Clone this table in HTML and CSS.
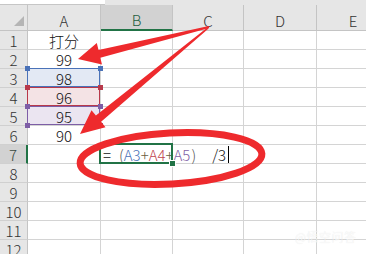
FILE: index.html
```html
<!DOCTYPE html>
<html lang="zh">
<head>
<meta charset="utf-8">
<title>Excel</title>
<link rel="stylesheet" href="styles.css">
</head>
<body>
<div class="sheet">
  <div class="topbar"><div class="namebox"></div><div class="fbar"></div></div>
  <div class="grid">
    <div class="corner"><span class="tri"></span></div>
    <div class="ch">A</div><div class="ch sel">B</div><div class="ch">C</div><div class="ch">D</div><div class="ch">E</div>

    <div class="rh">1</div><div class="c">打分</div><div class="c"></div><div class="c"></div><div class="c"></div><div class="c"></div>
    <div class="rh">2</div><div class="c">99</div><div class="c"></div><div class="c"></div><div class="c"></div><div class="c"></div>
    <div class="rh">3</div><div class="c ref r-blue">98</div><div class="c"></div><div class="c"></div><div class="c"></div><div class="c"></div>
    <div class="rh">4</div><div class="c ref r-red">96</div><div class="c"></div><div class="c"></div><div class="c"></div><div class="c"></div>
    <div class="rh">5</div><div class="c ref r-purple last">95</div><div class="c"></div><div class="c"></div><div class="c"></div><div class="c"></div>
    <div class="rh">6</div><div class="c">90</div><div class="c"></div><div class="c"></div><div class="c"></div><div class="c"></div>
    <div class="rh selr">7</div><div class="c"></div><div class="c active"><span class="f-eq">=</span><span class="f-p1">(</span><span class="f-a3">A3</span><span class="f-op">+</span><span class="f-a4">A4</span><span class="f-op">+</span><span class="f-a5">A5</span><span class="f-p2">)</span><span class="f-div">/3</span><span class="caret"></span></div><div class="c"></div><div class="c"></div><div class="c"></div>
    <div class="rh">8</div><div class="c"></div><div class="c"></div><div class="c"></div><div class="c"></div><div class="c"></div>
    <div class="rh">9</div><div class="c"></div><div class="c"></div><div class="c"></div><div class="c"></div><div class="c"></div>
    <div class="rh">10</div><div class="c"></div><div class="c"></div><div class="c"></div><div class="c"></div><div class="c"></div>
    <div class="rh">11</div><div class="c"></div><div class="c"></div><div class="c"></div><div class="c"></div><div class="c"></div>
    <div class="rh">12</div><div class="c"></div><div class="c"></div><div class="c"></div><div class="c"></div><div class="c"></div>
  </div>

  <svg class="marks" width="366" height="254" viewBox="0 0 366 254">
    <polygon fill="#ee2a2d" points="78,59 102,64.5 100.3,57.7 209.2,27.9 208.8,26.1 98.5,49.9 96.8,43.1"/>
    <polygon fill="#ee2a2d" points="80,134 105.5,127.2 101.1,121.8 208.6,28.6 207.4,27.4 95.9,115.6 91.5,110.2"/>
    <ellipse cx="171" cy="158.5" rx="91" ry="25.5" fill="none" stroke="#ee2a2d" stroke-width="7" transform="rotate(-3 171 158.5)"/>
  </svg>
  <div class="wm">@悟空问答</div>
</div>
</body>
</html>
```
FILE: styles.css
```css
html, body {
  margin: 0;
  padding: 0;
  background: #ffffff;
}
.sheet {
  position: relative;
  width: 366px;
  height: 254px;
  overflow: hidden;
  font-family: "Noto Sans CJK SC", "Noto Sans", sans-serif;
  font-weight: 300;
  color: #222;
}
.topbar {
  display: flex;
  height: 5px;
  background: #e6e6e6;
}
.namebox {
  width: 105px;
  background: #fff;
  border-bottom: 1px solid #c6c6c6;
  box-sizing: border-box;
}
.fbar {
  flex: 1;
}
.grid {
  display: grid;
  grid-template-columns: 28px 73px 72px 71px 73px 73px;
  grid-template-rows: 26px repeat(12, 19px);
}
.grid > div {
  box-sizing: border-box;
}
.corner {
  background: #e6e6e6;
  border-right: 1px solid #c4c4c4;
  border-bottom: 1px solid #c4c4c4;
  display: flex;
  justify-content: flex-end;
  align-items: flex-end;
  padding: 0 3px 4px 0;
}
.tri {
  width: 10px;
  height: 10px;
  background: #b5b5b5;
  clip-path: polygon(100% 0, 100% 100%, 0 100%);
}
.ch {
  background: #e6e6e6;
  border-right: 1px solid #c4c4c4;
  border-bottom: 1px solid #c4c4c4;
  display: flex;
  justify-content: center;
  align-items: flex-end;
  padding-bottom: 2px;
  font-size: 15px;
  line-height: 1;
  color: #333;
}
.ch.sel {
  background: #d2d2d2;
  border-bottom: 2px solid #217346;
  color: #1e5e3e;
}
.rh {
  background: #e6e6e6;
  border-right: 1px solid #c4c4c4;
  border-bottom: 1px solid #d0d0d0;
  display: flex;
  justify-content: center;
  align-items: center;
  font-size: 15px;
  line-height: 1;
  color: #333;
}
.rh.selr {
  background: #d2d2d2;
  border-right: 2px solid #217346;
  color: #3a4a40;
}
.c {
  border-right: 1px solid #d4d4d4;
  border-bottom: 1px solid #d4d4d4;
  display: flex;
  justify-content: center;
  align-items: center;
  font-size: 15px;
  line-height: 1;
  color: #111;
  white-space: nowrap;
}
.ref {
  position: relative;
  background: var(--fill);
}
.ref::before {
  content: "";
  position: absolute;
  top: -1px;
  left: -1px;
  right: 0;
  bottom: 0;
  border: 1px solid var(--line);
}
.ref::after {
  content: "";
  position: absolute;
  left: 70px;
  top: -3px;
  width: 5px;
  height: 5px;
  background: var(--line);
  box-shadow: -73px 0 0 var(--line);
}
.ref.last::after {
  box-shadow: -73px 0 0 var(--line), 0 19px 0 var(--line), -73px 19px 0 var(--line);
}
.r-blue { --line: #4a72b8; --fill: #e3e9f4; }
.r-red { --line: #b8394a; --fill: #f4e3e5; }
.r-purple { --line: #7d5ea6; --fill: #ebe5f1; }

.active {
  position: relative;
  justify-content: flex-start;
  padding-left: 2px;
  overflow: visible;
}
.active::before {
  content: "";
  position: absolute;
  top: -2px;
  left: -2px;
  right: -1px;
  bottom: -1px;
  border: 2px solid #217346;
}
.active::after {
  content: "";
  position: absolute;
  left: 68px;
  top: 15px;
  width: 5px;
  height: 5px;
  background: #217346;
  border: 1px solid #fff;
}
.f-eq { color: #111; }
.f-p1 { color: #555; margin-left: 8px; }
.f-p2 { color: #555; margin-left: 1px; }
.f-a3 { color: #4a72b8; }
.f-a4 { color: #c0444f; }
.f-a5 { color: #7d5ea6; }
.f-op { color: #6b6040; }
.f-div { color: #111; margin-left: 16px; }
.caret {
  flex: none;
  width: 1px;
  height: 17px;
  background: #000;
  margin-left: 2px;
}
.marks {
  position: absolute;
  left: 0;
  top: 0;
  pointer-events: none;
}
.wm {
  position: absolute;
  left: 295px;
  top: 231px;
  font-size: 12px;
  line-height: 1;
  color: rgba(255, 255, 255, 0.97);
  text-shadow: 0 0 1px rgba(0, 0, 0, 0.14);
  letter-spacing: 0.5px;
}
```
